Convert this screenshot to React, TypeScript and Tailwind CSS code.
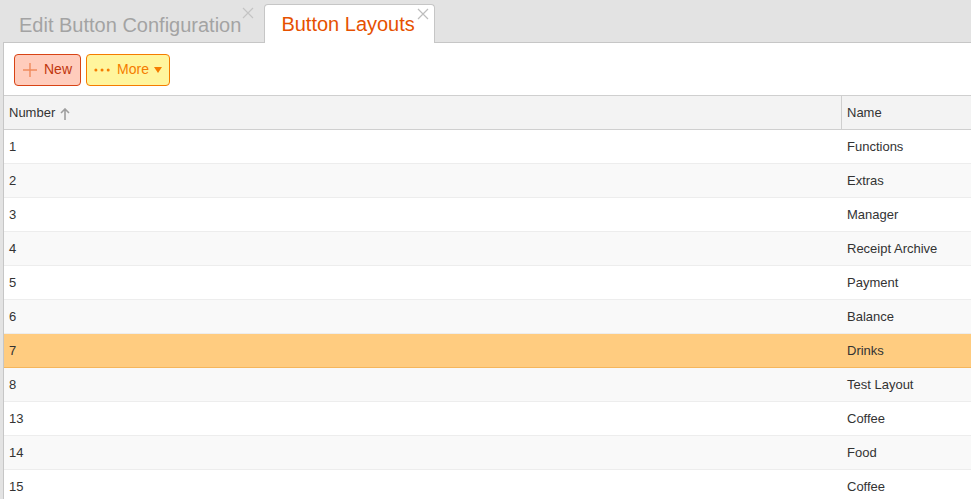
import React from 'react'

interface Layout {
  number: number;
  name: string;
}

const layouts: Layout[] = [
  { number: 1, name: "Functions" },
  { number: 2, name: "Extras" },
  { number: 3, name: "Manager" },
  { number: 4, name: "Receipt Archive" },
  { number: 5, name: "Payment" },
  { number: 6, name: "Balance" },
  { number: 7, name: "Drinks" },
  { number: 8, name: "Test Layout" },
  { number: 13, name: "Coffee" },
  { number: 14, name: "Food" },
  { number: 15, name: "Coffee" },
]

function CloseX({ className }: { className?: string }) {
  return (
    <svg width="12" height="12" viewBox="0 0 12 12" className={className}>
      <path d="M1 1L11 11M11 1L1 11" stroke="currentColor" strokeWidth="1.2" fill="none" />
    </svg>
  )
}

function App() {
  const selected = 7
  return (
    <div className="h-[499px] w-[971px] overflow-hidden bg-[#e3e3e3] font-['Liberation_Sans',Arial,sans-serif] text-[#333]">
      {/* tab strip */}
      <div className="flex h-[42px] items-end pl-[19px]">
        <div className="relative flex h-[38px] items-center pr-[23px] pt-[4px]">
          <span className="text-[20px] text-[#a3a3a3]">Edit Button Configuration</span>
          <CloseX className="absolute right-[10px] top-[3px] text-[#c4c4c4]" />
        </div>
        <div className="relative -mb-px flex h-[39px] w-[171px] items-center rounded-t-[4px] border border-b-0 border-[#c6c6c6] bg-white pl-[16px]">
          <span className="text-[20px] text-[#e65100]">Button Layouts</span>
          <CloseX className="absolute right-[5px] top-[3px] text-[#bdbdbd]" />
        </div>
      </div>

      {/* panel */}
      <div className="ml-[3px] h-[457px] border-l border-t border-[#c6c6c6] bg-white">
        <div className="flex h-[52px] items-center gap-[5px] pl-[10px] pt-[1px]">
          <button className="flex h-[32px] items-center gap-[6px] rounded-[4px] border border-[#d84315] bg-[#ffccbc] pl-[7px] pr-[8px] text-[14px] text-[#bf360c]">
            <svg width="16" height="16" viewBox="0 0 16 16">
              <path d="M8 1V15M1 8H15" stroke="#f08a5d" strokeWidth="1.4" fill="none" />
            </svg>
            New
          </button>
          <button className="flex h-[32px] w-[84px] items-center gap-[7px] rounded-[4px] border border-[#f57c00] bg-[#fff59d] pl-[7px] pr-[7px] text-[14px] text-[#f57c00]">
            <svg width="17" height="4" viewBox="0 0 17 4">
              <circle cx="2" cy="2" r="1.6" fill="#f57c00" />
              <circle cx="8.5" cy="2" r="1.6" fill="#f57c00" />
              <circle cx="15" cy="2" r="1.6" fill="#f57c00" />
            </svg>
            <span className="flex items-center gap-[5px]">
              More
              <svg width="8" height="6" viewBox="0 0 8 6">
                <path d="M0 0H8L4 6Z" fill="#f57c00" />
              </svg>
            </span>
          </button>
        </div>

        {/* grid header */}
        <div className="flex h-[35px] border-y border-[#cfcfcf] bg-[#f3f3f3] text-[13px]">
          <div className="flex w-[838px] items-center border-r border-[#cfcfcf] pl-[5px]">
            Number
            <svg width="10" height="12" viewBox="0 0 10 12" className="ml-[5px] mt-[2px]">
              <path d="M5 1V12M1 5L5 1L9 5" stroke="#9e9e9e" strokeWidth="1.6" fill="none" />
            </svg>
          </div>
          <div className="flex flex-1 items-center pl-[5px]">Name</div>
        </div>

        {layouts.map((row, i) => {
          const isSel = row.number === selected
          const bg = isSel ? "bg-[#ffcc80] border-[#f5b65c]" : i % 2 === 1 ? "bg-[#f9f9f9] border-[#ededed]" : "bg-white border-[#ededed]"
          return (
            <div key={i} className={`flex h-[34px] border-b text-[13px] ${bg}`}>
              <div className="flex w-[838px] items-center pl-[5px]">{row.number}</div>
              <div className="flex flex-1 items-center pl-[5px]">{row.name}</div>
            </div>
          )
        })}
      </div>
    </div>
  )
}

export default App
